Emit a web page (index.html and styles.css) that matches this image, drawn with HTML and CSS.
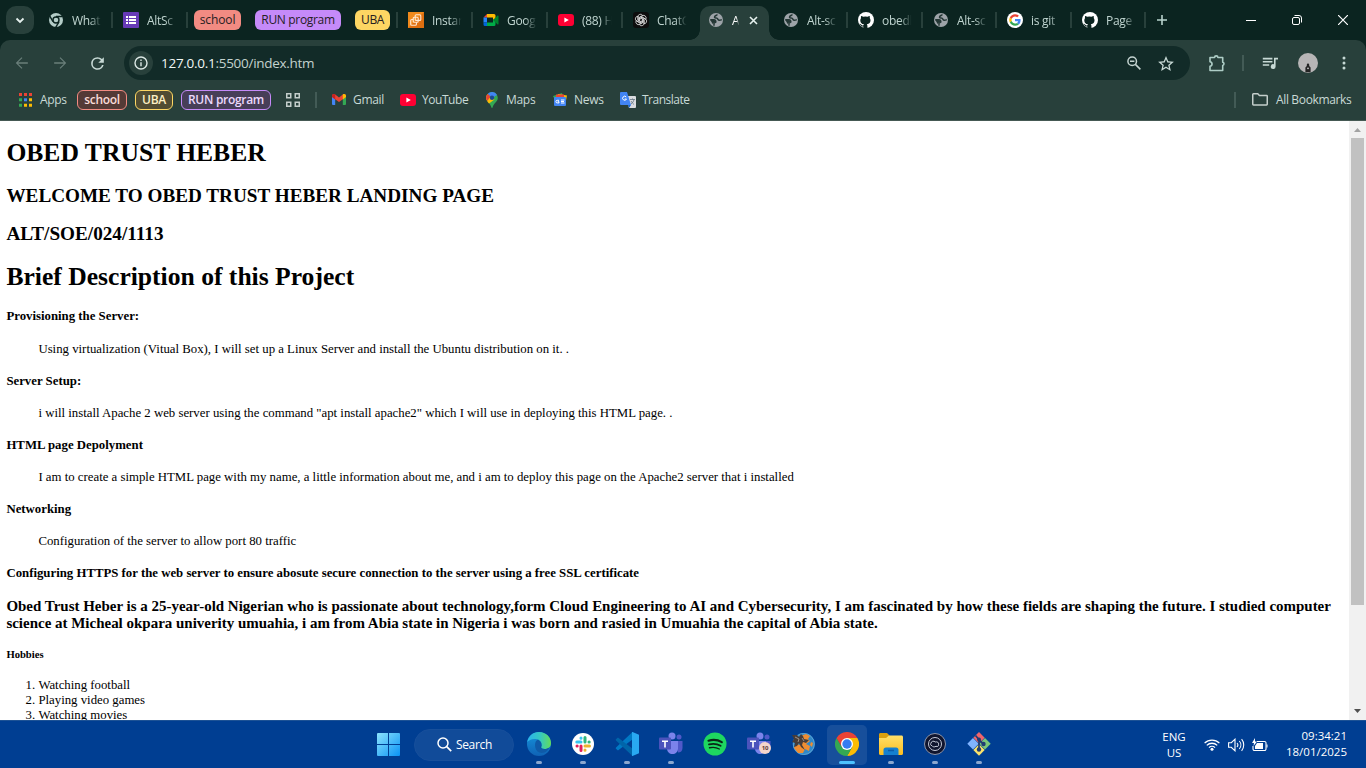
FILE: index.html
```html
<!DOCTYPE html>
<html lang="en">
<head>
<meta charset="utf-8">
<title>Desktop</title>
<link rel="stylesheet" href="styles.css">
</head>
<body>
<svg class="defs" aria-hidden="true">
  <defs>
    <linearGradient id="gWin" x1="0" y1="0" x2="1" y2="1"><stop offset="0" stop-color="#8be3fd"/><stop offset="1" stop-color="#0a93f5"/></linearGradient>
    <linearGradient id="gEdge" x1="0" y1="0" x2="1" y2="0"><stop offset="0" stop-color="#2bb3ee"/><stop offset=".55" stop-color="#35c8c0"/><stop offset="1" stop-color="#63dc5a"/></linearGradient>
    <linearGradient id="gEdge2" x1="0" y1="0" x2="0" y2="1"><stop offset="0" stop-color="#1695dd"/><stop offset="1" stop-color="#0f62b5"/></linearGradient>
    <linearGradient id="gFold" x1="0" y1="0" x2="0" y2="1"><stop offset="0" stop-color="#ffe06a"/><stop offset="1" stop-color="#fcbd1f"/></linearGradient>
    <symbol id="globe" viewBox="0 0 14 14"><circle cx="7" cy="7" r="7" fill="#9da3a8"/><path d="M8.200 1.300C8 2.600 5.500 2.500 5.500 4.200c0 .9 1.500.6 2.300.9 1.200.5.900 1.900 2.200 2.200 1 .2 2-.3 2.800-.7M1.200 6.800h3.600c1.500 0 2.200 1 2 2.300L5 10.200v2.500" fill="none" stroke="#243735" stroke-width="1.500"/><path d="M1.300 7h4l1.300 1.800-1.800 1L3.600 11z" fill="#243735"/></symbol>
    <symbol id="github" viewBox="0 0 16 16"><circle cx="8" cy="8" r="8" fill="#fff"/><path fill="#0b2420" d="M5.300 16c.1-.1.100-1 .1-1.600-2.200.5-2.700-.9-2.700-.9-.4-.9-.9-1.200-.9-1.200-.7-.5.100-.5.100-.5.800.1 1.200.8 1.200.8.700 1.200 1.900.9 2.300.7.100-.5.300-.9.500-1.100-1.800-.2-3.600-.9-3.600-3.900 0-.9.300-1.600.8-2.200-.1-.2-.4-1 .1-2.100 0 0 .7-.2 2.200.8a7.500 7.500 0 0 1 4 0c1.500-1 2.200-.8 2.200-.8.4 1.100.2 1.900.1 2.100.5.600.8 1.300.8 2.200 0 3-1.900 3.700-3.700 3.900.3.300.6.800.6 1.600V16z"/></symbol>
    <symbol id="yt" viewBox="0 0 16 12"><rect width="16" height="12" rx="3" fill="#ff0033"/><path d="M6.400 3.400v5.200L10.800 6z" fill="#fff"/></symbol>
    <symbol id="teams" viewBox="0 0 24 24"><circle cx="13" cy="4" r="3.500" fill="#7b83eb"/><circle cx="20" cy="5" r="2.500" fill="#5059c9"/><path fill="#5059c9" d="M17 9h6.500v7c0 3-2 4.500-4.500 4.500z"/><path fill="#7b83eb" d="M8 9h11v7.500c0 3.500-2.500 5.500-5.500 5.500S8 20 8 16.500z"/><rect x="0" y="5.500" width="12" height="12" rx="1" fill="#4b53bc"/><path fill="#fff" d="M3 8.400h6v1.500H6.800v5.700H5.200V9.900H3z"/></symbol>
  </defs>
</svg>

<div class="desktop">
  <header class="browser">
    <div class="tabstrip">
      <button class="tab-search" aria-label="Search tabs"><svg width="10" height="7" viewBox="0 0 10 7"><path d="M1.500 1.500 5 5l3.500-3.500" fill="none" stroke="#e6f1ee" stroke-width="1.800"/></svg></button>
      <div class="tab tab-first"><svg class="fav" viewBox="0 0 16 16"><circle cx="8" cy="8" r="7" fill="#b4cdc8"/><circle cx="8" cy="8" r="3" fill="#b4cdc8" stroke="#0b2420" stroke-width="1.400"/><path d="M8 4.500h6.500M5 9.700 1.800 4.200M11 9.800l-3.300 5.500" stroke="#0b2420" stroke-width="1.400"/></svg><span class="label">What</span></div>
      <div class="tab"><svg class="fav" viewBox="0 0 16 16"><rect width="16" height="16" rx="1" fill="#673ab7"/><path d="M3 4h2v2H3zm0 3h2v2H3zm0 3h2v2H3zM6 4h7v2H6zm0 3h7v2H6zm0 3h7v2H6z" fill="#fff"/></svg><span class="label">AltSc</span></div>
      <span class="group group-red">school</span>
      <span class="group group-purple">RUN program</span>
      <span class="group group-yellow">UBA</span>
      <div class="tab tab-after"><svg class="fav" viewBox="0 0 16 16"><rect width="16" height="16" fill="#f08a1c"/><path d="M0 16 16 0v16z" fill="#de6f10"/><g fill="none" stroke="#ffe9d2" stroke-width="1.100"><rect x="7.200" y="2.800" width="5.600" height="5.600" rx="1"/><rect x="5.200" y="5.200" width="5" height="5" rx="1"/><path d="M5.200 7.500H3.700a1 1 0 0 0-1 1v3.700a1 1 0 0 0 1 1h3.700a1 1 0 0 0 1-1v-2"/></g></svg><span class="label">Instar</span></div>
      <div class="tab"><svg class="fav" viewBox="0 0 16 16"><path d="M4 2h7a1.500 1.500 0 0 1 1.500 1.500v3L10 8V5.500H4z" fill="#ffba00"/><path d="M4 2v3.500H.500z" fill="#ea4335"/><path d="M.500 5.500H4v5H.500z" fill="#2684fc"/><path d="M.500 10.500H4V14H2a1.500 1.500 0 0 1-1.500-1.500z" fill="#0066da"/><path d="M4 10.500h6V8l2.500-1.500v6A1.500 1.500 0 0 1 11 14H4z" fill="#00ac47"/><path d="m10 8 4.300-4.300c.5-.4 1.200-.2 1.200.4v7.800c0 .6-.7.800-1.200.4z" fill="#00832d"/></svg><span class="label">Goog</span></div>
      <div class="tab"><svg class="fav" viewBox="0 0 16 16"><use href="#yt" y="2" width="16" height="12"/></svg><span class="label">(88) H</span></div>
      <div class="tab tab-plain"><svg class="fav" viewBox="0 0 16 16"><rect width="16" height="16" rx="3" fill="#0d0d0d"/><g fill="none" stroke="#ddd" stroke-width=".8"><path id="petal" d="M8 10.200 4.900 8.400V4.800a2.600 2.600 0 0 1 4.900-1.200L6.700 5.400V8"/><use href="#petal" transform="rotate(60 8 8)"/><use href="#petal" transform="rotate(120 8 8)"/><use href="#petal" transform="rotate(180 8 8)"/><use href="#petal" transform="rotate(240 8 8)"/><use href="#petal" transform="rotate(300 8 8)"/></g></svg><span class="label">ChatG</span></div>
      <div class="tab tab-active"><svg class="fav" viewBox="0 0 16 16"><use href="#globe" x="1" y="1" width="14" height="14"/></svg><span class="label">A</span><svg class="close" viewBox="0 0 9 9"><path d="m1 1 7 7m0-7L1 8" stroke="#e6f1ee" stroke-width="1.600"/></svg></div>
      <div class="tab tab-next"><svg class="fav" viewBox="0 0 16 16"><use href="#globe" x="1" y="1" width="14" height="14"/></svg><span class="label">Alt-sc</span></div>
      <div class="tab"><svg class="fav"><use href="#github"/></svg><span class="label">obedl</span></div>
      <div class="tab tab-narrow"><svg class="fav" viewBox="0 0 16 16"><use href="#globe" x="1" y="1" width="14" height="14"/></svg><span class="label">Alt-sc</span></div>
      <div class="tab"><svg class="fav" viewBox="0 0 16 16"><circle cx="8" cy="8" r="8" fill="#fff"/><g transform="translate(2.200 2.200) scale(.242)"><path fill="#ea4335" d="M24 9.500c3.540 0 6.710 1.220 9.210 3.600l6.850-6.850C35.900 2.380 30.470 0 24 0 14.620 0 6.510 5.380 2.560 13.220l7.980 6.190C12.430 13.720 17.740 9.500 24 9.500z"/><path fill="#4285f4" d="M46.980 24.550c0-1.570-.15-3.090-.38-4.550H24v9.020h12.940c-.58 2.960-2.260 5.480-4.780 7.180l7.730 6c4.510-4.180 7.090-10.360 7.090-17.650z"/><path fill="#fbbc05" d="M10.530 28.590c-.48-1.450-.76-2.990-.76-4.590s.27-3.140.76-4.590l-7.980-6.190C.92 16.460 0 20.120 0 24c0 3.880.92 7.540 2.560 10.780z"/><path fill="#34a853" d="M24 48c6.480 0 11.930-2.130 15.890-5.810l-7.730-6c-2.150 1.450-4.920 2.300-8.160 2.300-6.260 0-11.570-4.220-13.470-9.910l-7.980 6.190C6.510 42.620 14.620 48 24 48z"/></g></svg><span class="label">is git</span></div>
      <div class="tab tab-narrow"><svg class="fav"><use href="#github"/></svg><span class="label">Page</span></div>
      <svg class="new-tab" width="10" height="10" viewBox="0 0 10 10"><path d="M5 0v10M0 5h10" stroke="#b8d3cd" stroke-width="1.600"/></svg>
      <div class="window-controls">
        <svg width="10" height="10" viewBox="0 0 10 10"><path d="M0 5.500h10" stroke="#fff"/></svg>
        <svg width="10" height="10" viewBox="0 0 10 10"><rect x=".5" y="2.500" width="7" height="7" rx="1.500" fill="none" stroke="#fff"/><path d="M2.500.5H7A2.500 2.500 0 0 1 9.500 3v4.500" fill="none" stroke="#fff"/></svg>
        <svg width="10" height="10" viewBox="0 0 10 10"><path d="m0 0 10 10M10 0 0 10" stroke="#fff" stroke-width="1.200"/></svg>
      </div>
    </div>

    <div class="toolbar">
      <svg class="nav dim" viewBox="0 0 24 24"><path d="M19 11.200H7.300l5.200-5.200L11.500 5l-7 7 7 7 1-1-5.200-5.200H19z"/></svg>
      <svg class="nav dim flip" viewBox="0 0 24 24"><path d="M19 11.200H7.300l5.200-5.200L11.500 5l-7 7 7 7 1-1-5.200-5.200H19z"/></svg>
      <svg class="nav" viewBox="0 0 24 24"><path d="M17.650 6.350A7.960 7.960 0 0 0 12 4c-4.420 0-8 3.580-8 8s3.580 8 8 8c3.730 0 6.840-2.550 7.730-6h-2.080A6 6 0 1 1 12 6c1.660 0 3.140.69 4.220 1.780L13 11h7V4z"/></svg>
      <div class="omnibox">
        <span class="site-info"><svg width="14" height="14" viewBox="0 0 14 14"><circle cx="7" cy="7" r="6" fill="none" stroke="#dbe7e4" stroke-width="1.400"/><path d="M7 6.200v4M7 3.600V5" stroke="#dbe7e4" stroke-width="1.400"/></svg></span>
        <span class="url">127.0.0.1<span class="path">:5500/index.htm</span></span>
        <svg class="zoom-out" width="14" height="14" viewBox="0 0 14 14"><g fill="none" stroke="#c4d3d0" stroke-width="1.500"><circle cx="5.200" cy="5.200" r="4.300"/><path d="m8.400 8.400 5 5M3 5.200h4.400"/></g></svg>
        <svg class="star" viewBox="2 2 20 19"><path d="m22 9.240-7.190-.62L12 2 9.190 8.630 2 9.240l5.460 4.730L5.820 21 12 17.270 18.180 21l-1.630-7.030zM12 15.400l-3.760 2.270 1-4.280-3.320-2.880 4.380-.38L12 6.100l1.710 4.040 4.380.38-3.320 2.880 1 4.280z"/></svg>
      </div>
      <svg class="extensions" width="18" height="18" viewBox="0 0 18 18"><path d="M2 3.500h4.600a1.500 1.500 0 0 1 3.300 0h4.800v4.700a1.700 1.700 0 0 1 0 3.300v5H2v-4.300c2.700-.4 2.700-4 0-4.400z" fill="none" stroke="#aecdc6" stroke-width="1.600" stroke-linejoin="round"/></svg>
      <span class="vsep"></span>
      <svg class="media" viewBox="2 5 20 15"><path d="M15 6H3v2h12zm0 4H3v2h12zM3 16h8v-2H3zM17 6v8.180A3 3 0 1 0 19 17V8h3V6z"/></svg>
      <svg class="avatar" width="20" height="20" viewBox="0 0 20 20"><circle cx="10" cy="10" r="10" fill="#b7b5b6"/><path d="M7.400 19v-4.500L8.800 13v-1.300a1.200 1.200 0 0 1 2.400 0V13l1.400 1.500V19a10 10 0 0 1-5.200 0z" fill="#242424"/><circle cx="10" cy="15.300" r=".9" fill="#ccc"/></svg>
      <svg class="menu" width="4" height="14" viewBox="0 0 4 14"><circle cx="2" cy="2" r="1.500"/><circle cx="2" cy="7" r="1.500"/><circle cx="2" cy="12" r="1.500"/></svg>
    </div>

    <div class="bookmarks">
      <svg class="apps" width="13" height="14" viewBox="0 0 13 14"><path fill="#ea4335" d="M0 0h3v3H0zm5 0h3v3H5zm5 0h3v3h-3z"/><path fill="#34a853" d="M0 5.300h3v3H0zm0 5.400h3v3H0z"/><path fill="#4285f4" d="M5 5.300h3v3H5z"/><path fill="#fbbc04" d="M10 5.300h3v3h-3zm0 5.400h3v3h-3zm-5 0h3v3H5z"/></svg>
      <span class="bm apps-label">Apps</span>
      <span class="chip chip-red">school</span>
      <span class="chip chip-yellow">UBA</span>
      <span class="chip chip-purple">RUN program</span>
      <svg class="grid4" width="14" height="14" viewBox="0 0 14 14"><g fill="none" stroke="#c4cecb" stroke-width="1.500"><rect x=".75" y=".75" width="4" height="4"/><rect x="9.250" y=".75" width="4" height="4"/><rect x=".75" y="9.250" width="4" height="4"/><rect x="9.250" y="9.250" width="4" height="4"/></g></svg>
      <span class="vsep bm-sep"></span>
      <svg class="gmail" width="14" height="11" viewBox="0 0 14 11"><path fill="#4285f4" d="M0 2h3.200v9H1a1 1 0 0 1-1-1z"/><path fill="#34a853" d="M10.800 2H14v8a1 1 0 0 1-1 1h-2.200z"/><path fill="#ea4335" d="M0 2c0-2 2-2.500 3.200-1.500L7 3.500l3.800-3C12 -.5 14 0 14 2v1L7 8 0 3z"/><path fill="#c5221f" d="M0 2c0-1.800 2-2.500 3.200-1.500v4.900L0 3z"/><path fill="#fbbc04" d="M14 2c0-1.800-2-2.500-3.200-1.500v4.900L14 3z"/></svg>
      <span class="bm w-gmail">Gmail</span>
      <svg class="bmyt"><use href="#yt"/></svg>
      <span class="bm w-youtube">YouTube</span>
      <svg class="maps" width="12" height="16" viewBox="0 0 12 16"><path d="M6 0a5.800 5.800 0 0 1 5.800 5.800C11.800 10 7.500 11 6.600 15.500c-.1.500-1.100.5-1.200 0C4.500 11 .2 10 .2 5.800A5.800 5.800 0 0 1 6 0z" fill="#34a853"/><path d="M1.600 2.100 8.500 7.500 3 11.500C1.500 9.800.2 8.200.2 5.800c0-1.500.5-2.700 1.400-3.700z" fill="#fbbc04"/><path d="M1.600 2.100 6 6l5-3.100A5.800 5.800 0 0 0 1.600 2.100z" fill="#4285f4"/><path d="m1.600 2.100 3 2.500L1.300 9A5.700 5.700 0 0 1 1.600 2.100z" fill="#ea4335"/><circle cx="6" cy="5.800" r="2.200" fill="#1b4a91"/></svg>
      <span class="bm w-maps">Maps</span>
      <svg class="news" width="14" height="13" viewBox="0 0 14 13"><path fill="#34a853" d="m0 3 9-3 2 6-8 3z"/><path fill="#fbbc04" d="m5 1 9 1.500-1 5-9-1z"/><path fill="#ea4335" d="M3 1.500h8V6H3z"/><rect x="1" y="4" width="12" height="9" rx="1" fill="#4285f4"/><path d="M6 7.300H4.200a1.300 1.300 0 1 0 0 2.600H6V8.700H4.700M8 7h3.500M8 8.500h3M8 10h3.500" stroke="#fff" fill="none"/></svg>
      <span class="bm w-news">News</span>
      <svg class="translate" width="16" height="16" viewBox="0 0 16 16"><path fill="#dadce0" d="M6 4h9a1 1 0 0 1 1 1v10a1 1 0 0 1-1 1H9z"/><path fill="#4285f4" d="M1 0h6l4 13H1a1 1 0 0 1-1-1V1a1 1 0 0 1 1-1z"/><path fill="#1967d2" d="m8 13 3 0-2 3z"/><path d="M6.200 5a2 2 0 1 0 .3 2H4.700" stroke="#fff" fill="none"/><path d="M10 7.500h5M12.500 6.500v1M14 7.500c-.5 2-1.500 3.500-3 4.500M11 9c.7 1.500 2 2.500 3 3.500" stroke="#637381" stroke-width=".8" fill="none"/></svg>
      <span class="bm">Translate</span>
      <div class="bm-right">
        <span class="vsep"></span>
        <svg class="folder" width="16" height="13" viewBox="0 0 16 13"><path d="M.75 1.500c0-.4.3-.75.7-.75h4.300l1.700 1.700h7.100c.4 0 .7.300.7.700v8.100c0 .4-.3.700-.7.700H1.450a.7.700 0 0 1-.7-.7z" fill="none" stroke="#c4cecb" stroke-width="1.500"/></svg>
        <span class="bm all-bm">All Bookmarks</span>
      </div>
    </div>
  </header>

  <div class="viewport">
    <main class="page">
      <h1>OBED TRUST HEBER</h1>
      <h2>WELCOME TO OBED TRUST HEBER LANDING PAGE</h2>
      <h2>ALT/SOE/024/1113</h2>
      <h1>Brief Description of this Project</h1>
      <h4 class="first">Provisioning the Server:</h4>
      <p class="indent">Using virtualization (Vitual Box), I will set up a Linux Server and install the Ubuntu distribution on it. .</p>
      <h4>Server Setup:</h4>
      <p class="indent">i will install Apache 2 web server using the command "apt install apache2" which I will use in deploying this HTML page. .</p>
      <h4>HTML page Depolyment</h4>
      <p class="indent">I am to create a simple HTML page with my name, a little information about me, and i am to deploy this page on the Apache2 server that i installed</p>
      <h4>Networking</h4>
      <p class="indent">Configuration of the server to allow port 80 traffic</p>
      <h4>Configuring HTTPS for the web server to ensure abosute secure connection to the server using a free SSL certificate</h4>
      <h3>Obed Trust Heber is a 25-year-old Nigerian who is passionate about technology,form Cloud Engineering to AI and Cybersecurity, I am fascinated by how these fields are shaping the future. I studied computer science at Micheal okpara univerity umuahia, i am from Abia state in Nigeria i was born and rasied in Umuahia the capital of Abia state.</h3>
      <h5>Hobbies</h5>
      <ol><li>Watching football</li><li>Playing video games</li><li>Watching movies</li></ol>
    </main>
    <div class="scrollbar">
      <svg width="7" height="4" viewBox="0 0 7 4"><path d="M0 4 3.500 0 7 4z" fill="#a3a3a3"/></svg>
      <span class="thumb"></span>
      <svg width="7" height="4" viewBox="0 0 7 4"><path d="m0 0 3.500 4L7 0z" fill="#505050"/></svg>
    </div>
  </div>

  <footer class="taskbar">
    <div class="dock">
      <svg class="start" width="23" height="23" viewBox="0 0 23 23"><path fill="url(#gWin)" d="M1 0h10v11H0V1a1 1 0 0 1 1-1zm11 0h10a1 1 0 0 1 1 1v10H12zM0 12h11v11H1a1 1 0 0 1-1-1zm12 0h11v10a1 1 0 0 1-1 1H12z"/></svg>
      <div class="search"><svg width="15" height="15" viewBox="0 0 15 15"><circle cx="6" cy="6" r="5" fill="none" stroke="#fff" stroke-width="1.500"/><path d="m9.700 9.700 4.500 4.500" stroke="#fff" stroke-width="1.700"/></svg><span>Search</span></div>
      <div class="app run"><svg viewBox="0 0 24 24"><circle cx="12" cy="12" r="12" fill="url(#gEdge2)"/><path fill="url(#gEdge)" d="M.2 10C1.300 4 6 0 12 0c7 0 12 5 12 11 0 4-3 6-6.500 6-2.500 0-4-1-3.600-2 .6-1 .8-2 .6-3C14 9 11 7 7.500 7 4 7 1.500 8.500.2 10z"/><path fill="#0f5aa8" d="M8 13c0-3 1.500-5 3-5.500 2 1 3.500 3 3.500 4.500 0 2-2 3-.5 4.200 2.500 1.800 6 1 8.500-.7C20 21 15 21.500 12.500 20.500 9.500 19.500 8 16.500 8 13z"/><path fill="#003e92" d="M14.500 12c0 2-2 3-.5 4.200 3 1.800 7 1 10 -1.200-1.500 1.500-4 2.300-6.500 2-3-.3-4-1.300-3-3z"/></svg></div>
      <div class="app run"><svg viewBox="0 0 24 24"><circle cx="12" cy="12" r="11" fill="#fff"/><g stroke-width="3" stroke-linecap="round"><path d="M10 6v.2M5.800 10H10" stroke="#36c5f0"/><path d="M14 5.500V10M18 10h.2" stroke="#2eb67d"/><path d="M14 14h4.500M14 18v.2" stroke="#ecb22e"/><path d="M10 14v4.500M6 14h.2" stroke="#e01e5a"/></g></svg></div>
      <div class="app run"><svg viewBox="0 0 24 24"><path fill="#0079c5" d="M17.500 0 1 15.500c-.4.400-.4 1 0 1.300l1.300 1.300c.4.300.9.300 1.300 0L18 7V1z"/><path fill="#0065a9" d="M17.500 24 1 8.500c-.4-.4-.4-1 0-1.300l1.300-1.300c.4-.3.900-.3 1.300 0L18 17v6z"/><path fill="#29a9f2" d="M17.500 0 24 2.800v18.400L17.500 24c-.5 0-.7-.5-.5-1V1c-.2-.5 0-1 .5-1z"/></svg></div>
      <div class="app run"><svg><use href="#teams"/></svg></div>
      <div class="app"><svg viewBox="0 0 24 24"><circle cx="12" cy="12" r="11.500" fill="#1ed760"/><g fill="none" stroke="#0b2616" stroke-linecap="round"><path d="M5.500 8.700c4.500-1.300 9.500-.8 13.300 1.400" stroke-width="2.200"/><path d="M6 12.400c4-1.100 8.200-.6 11.600 1.300" stroke-width="1.800"/><path d="M6.500 15.800c3.500-.9 6.800-.5 9.800 1.200" stroke-width="1.400"/></g></svg></div>
      <div class="app"><svg viewBox="0 0 24 24"><use href="#teams"/><circle cx="18" cy="16" r="6" fill="#f4d5cb"/><text class="badge" x="14.700" y="18.300">10</text></svg></div>
      <div class="app"><svg viewBox="0 0 24 24"><circle cx="12.800" cy="12" r="11" fill="#2f88c9"/><circle cx="12.800" cy="12" r="10.500" fill="none" stroke="#5ba3d4"/><path fill="#ef8d32" d="m9 4 6-2 4 2-2 3 2 2-4 3 4 2-1 5-4-2-2 4-5 0-4-5 2-4 4 1z"/><path fill="#ef8d32" d="m20 10 2 1-1 4-2-2z"/><path fill="#473c38" d="m1 3 5 0 2 2 2-3 2 2 1 3 5 1-3 3-3-1-1 3 3 5-4-3-2-4-2 3-3 1 1-4-3-1 2-3z"/><path d="m4 5 4 2-1 3M11 6l2 3" stroke="#9b9087" fill="none"/></svg></div>
      <div class="app current"><svg viewBox="0 0 24 24"><path fill="#ea4335" d="M1.600 6A12 12 0 0 1 22.400 6H12v6z"/><path fill="#fbbc04" d="M22.400 6A12 12 0 0 1 12 24l5.200-9L12 6z"/><path fill="#34a853" d="M12 24A12 12 0 0 1 1.600 6l5.200 9 5.200 3 3.200.7z"/><path fill="#34a853" d="m6.800 15 5.200 3 5.200-3L12 24z"/><path fill="#ea4335" d="M1.600 6 6.800 15 8 8l4-2z"/><circle cx="12" cy="12" r="6" fill="#fff"/><circle cx="12" cy="12" r="4.700" fill="#367cf0"/></svg></div>
      <div class="app run"><svg viewBox="0 0 24 24"><path fill="#dba00d" d="M0 2.500C0 1.600.6 1 1.500 1H8l2.500 2.500L8 7H0z"/><path fill="url(#gFold)" d="M0 6h7l3-2.500h12.500c.9 0 1.500.6 1.500 1.500v16.500c0 .9-.6 1.500-1.500 1.500h-21C.6 23 0 22.400 0 21.500z"/><path fill="#1480d1" d="M4.500 23v-5c0-1.500.8-2.500 2.500-2.500h10c1.700 0 2.500 1 2.500 2.500v5z"/><path stroke="#0b5ba9" stroke-width="1.500" d="M9 18.500h6"/></svg></div>
      <div class="app run"><svg viewBox="0 0 24 24"><circle cx="12" cy="12" r="10.500" fill="#10152e" stroke="#8d94a8"/><g fill="none" stroke="#c5cad8" stroke-width="1"><circle cx="12" cy="12" r="6.500"/><path d="M8 11.200c0-2 3-2.700 4.200-1.200 2-.7 4 .7 3.300 2.200.8 1.600-.9 2.900-2.500 2.100-1.300 1-3.500.7-4-.6-1.600-.2-1.800-1.700-1-2.500z"/></g></svg></div>
      <div class="app run"><svg viewBox="0 0 24 24"><path fill="#ef646b" d="m12 0 5.700 5.700L12 11.400 6.300 5.700z"/><path fill="#80b3ff" d="m6 6 5.700 5.700L6 17.400.3 11.700z"/><path fill="#7bc67a" d="m18 6 5.700 5.700L18 17.400l-5.700-5.700z"/><path fill="#fae26b" d="m12 12.300 5.700 5.700L12 23.700 6.300 18z"/><path d="m8.500 3.500 3.500 4V18M12 8l4.500 4" stroke="#203c73" stroke-width="1.700" fill="none"/><g fill="#203c73"><circle cx="12" cy="7.500" r="2"/><circle cx="12" cy="17.500" r="2.200"/><circle cx="16.500" cy="12" r="2.200"/></g></svg></div>
    </div>
    <div class="tray">
      <div class="lang">ENG<br>US</div>
      <svg class="wifi" width="16" height="13" viewBox="0 0 16 13"><g fill="none" stroke="#fff" stroke-width="1.300"><path d="M.6 5.100a10.500 10.500 0 0 1 14.800 0M2.800 7.400a7.400 7.400 0 0 1 10.400 0M5 9.600a4.300 4.300 0 0 1 6 0"/></g><circle cx="8" cy="11.300" r="1.500" fill="#fff"/></svg>
      <svg class="sound" width="17" height="14" viewBox="0 0 17 14"><g fill="none" stroke="#fff" stroke-width="1.100"><path d="M.6 4.700h2.700L7 1.200v11.600L3.300 9.300H.6zM9 5a3 3 0 0 1 0 4M11.300 3a6 6 0 0 1 0 8M13.600 1.200a9 9 0 0 1 0 11.600"/></g></svg>
      <svg class="battery" width="16" height="14" viewBox="0 0 16 14"><path d="M5 3.500h7.500a1.500 1.500 0 0 1 1.500 1.500v6a1.500 1.500 0 0 1-1.500 1.500h-10A1.500 1.500 0 0 1 1 11V8" fill="none" stroke="#fff" stroke-width="1.100"/><path fill="#fff" d="M5 5h6v6H3V8zM14.500 6.500h1v3h-1zM3 0 0 5h2L1.500 8 5 3.500H3z"/></svg>
      <div class="clock">09:34:21<br>18/01/2025</div>
    </div>
  </footer>
</div>
</body>
</html>
```
FILE: styles.css
```css
* { box-sizing: border-box; }
body { margin: 0; overflow: hidden; font-family: "Open Sans", "Noto Sans", sans-serif; }
svg { display: block; flex: none; }
.defs { position: absolute; width: 0; height: 0; }
.desktop { width: 1366px; height: 768px; display: flex; flex-direction: column; overflow: hidden; background: #fff; }

.browser { height: 121px; flex: none; background: #0b2420; }
.tabstrip { height: 40px; display: flex; align-items: center; padding-left: 6px; }
.tab-search { width: 28px; height: 28px; flex: none; border: 0; border-radius: 10px; background: #28403b; display: flex; align-items: center; justify-content: center; padding: 0; }
.tab { position: relative; flex: none; width: 75px; height: 40px; padding: 0 0 0 10px; display: flex; align-items: center; }
.tab::after { content: ""; position: absolute; right: 0; top: 12px; width: 2px; height: 16px; background: #28403b; }
.tab-first { margin-left: 4px; }
.tab-narrow { width: 74px; }
.tab-plain::after, .tab-active::after { display: none; }
.tab-after { margin-left: 8px; }
.tab-after::before { content: ""; position: absolute; left: -2px; top: 12px; width: 2px; height: 16px; background: #28403b; }
.fav { width: 16px; height: 16px; }
.label { margin-left: 8px; width: 33px; padding-top: 1px; white-space: nowrap; font-size: 12px; line-height: 18px; letter-spacing: -.3px; color: #c0d5d0; -webkit-mask-image: linear-gradient(90deg, #000 55%, transparent 90%); mask-image: linear-gradient(90deg, #000 55%, transparent 90%); }
.tab-active { width: 69px; height: 34px; margin: 6px 4px 0 2px; padding: 0 0 6px 8px; background: #28403b; border-radius: 10px 10px 0 0; }
.tab-active::before { content: ""; position: absolute; left: -10px; right: -10px; bottom: 0; height: 10px; background: radial-gradient(circle at 0 0, transparent 9.500px, #28403b 10px) left / 10px 10px no-repeat, radial-gradient(circle at 100% 0, transparent 9.500px, #28403b 10px) right / 10px 10px no-repeat; }
.tab-active .label { width: 8px; color: #fff; }
.close { width: 9px; height: 9px; margin-left: 9px; }
.group { height: 20px; flex: none; border-radius: 6px; font-size: 12px; line-height: 19px; text-align: center; white-space: nowrap; color: #26201f; letter-spacing: -.1px; }
.group-red { width: 47px; margin-left: 6px; background: #f28b82; }
.group-purple { width: 86px; margin-left: 14px; background: #c58af9; letter-spacing: -.33px; }
.group-yellow { width: 35px; margin-left: 14px; background: #fdd663; letter-spacing: -.4px; }
.new-tab { margin-left: 11px; }
.window-controls { margin-left: auto; padding-right: 18px; display: flex; gap: 36px; }

.toolbar { height: 40px; display: flex; align-items: center; padding: 6px 20px 0 12px; background: #28403b; border-radius: 10px 10px 0 0; }
.toolbar svg { fill: #c7d9d5; }
.nav { width: 20px; height: 20px; margin-right: 18px; }
.toolbar .dim { fill: #6a7f7a; }
.flip { transform: scaleX(-1); }
.nav:nth-child(3) { width: 19px; height: 19px; margin-right: 17px; }
.omnibox { width: 1066px; height: 34px; flex: none; display: flex; align-items: center; padding: 0 16px 0 5px; border-radius: 17px; background: #122b28; }
.site-info { width: 24px; height: 24px; display: flex; align-items: center; justify-content: center; border-radius: 50%; background: #28403b; }
.url { margin-left: 8px; flex: 1; font-size: 13.500px; color: #f1f8f6; letter-spacing: -.28px; }
.path { color: #c3d2ce; }
.star { width: 16px; height: 15px; margin-left: 17px; }
.omnibox .zoom-out, .toolbar .extensions { fill: none; }
.extensions { margin-left: 18px; }
.vsep { width: 2px; height: 16px; flex: none; background: #435b56; }
.toolbar .vsep { margin-left: 16px; }
.media { width: 16px; height: 12px; margin-left: 18px; }
.avatar { margin-left: 20px; }
.menu { margin-left: 24px; }

.bookmarks { height: 41px; display: flex; align-items: center; padding: 0 14px 1px 19px; background: #28403b; border-bottom: 1px solid #455953; }
.bm { font-size: 12px; line-height: 18px; padding-top: 1px; color: #c9dad6; white-space: nowrap; letter-spacing: -.45px; }
.apps-label { width: 30px; margin-left: 8px; letter-spacing: -.3px; }
.chip { height: 20px; flex: none; border: 1px solid; border-radius: 6px; font-size: 12px; line-height: 18px; font-weight: 600; text-align: center; letter-spacing: -.3px; white-space: nowrap; }
.chip-red { width: 50px; margin-left: 7px; border-color: #f28b82; background: #543a36; color: #fbdcd8; }
.chip-yellow { width: 38px; margin-left: 8px; border-color: #fdd663; background: #514c32; color: #fdf0c4; }
.chip-purple { width: 90px; margin-left: 8px; border-color: #c58af9; background: #473e58; color: #ecd9fd; }
.grid4 { margin-left: 15px; }
.bm-sep { margin: 0 15px 0 15px; }
.w-gmail { width: 31px; margin: 0 16px 0 7px; letter-spacing: -.3px; }
.bmyt { width: 16px; height: 12px; }
.w-youtube { width: 46px; margin-left: 6px; margin-right: 18px; }
.w-maps { width: 29px; margin: 0 18px 0 8px; letter-spacing: -.3px; }
.w-news { width: 29px; margin: 0 17px 0 7px; letter-spacing: -.3px; }
.translate + .bm { margin-left: 6px; letter-spacing: -.5px; }
.bm-right { margin-left: auto; display: flex; align-items: center; }
.folder { margin: 0 8px 0 16px; }
.all-bm { width: 76px; letter-spacing: -.35px; }

.viewport { height: 599px; flex: none; display: flex; overflow: hidden; }
.page { width: 1349px; height: 599px; overflow: hidden; padding: 0 6.400px; font-family: "Liberation Serif", "Times New Roman", serif; font-size: 12.800px; line-height: 15px; color: #000; }
.page h1 { font-size: 25.600px; line-height: 30px; margin: 17px 0; }
.page h2 { font-size: 19.200px; line-height: 22px; margin: 16px 0; }
.page h3 { font-size: 14.976px; line-height: 17px; margin: 15px 0; }
.page h4 { font-size: 12.800px; line-height: 15px; margin: 17px 0; }
.page .first { margin: 17px 0 18px; }
.page h5 { font-size: 10.624px; line-height: 12px; margin: 17px 0; }
.page .indent { margin: 0 0 0 32px; }
.page ol { margin: 0; padding-left: 32px; }
.scrollbar { width: 17px; height: 599px; display: flex; flex-direction: column; align-items: center; padding: 7px 0 7px; background: #f1f1f1; }
.thumb { width: 13px; height: 467px; margin: 6px 0 auto; background: #c1c1c1; }

.taskbar { height: 48px; flex: none; display: flex; align-items: center; border-top: 1px solid #1d5295; background: #003e92; color: #fff; padding: 0 19px 0 377px; }
.dock { display: flex; align-items: center; height: 47px; }
.search { width: 100px; height: 32px; margin: 0 3px 0 14px; display: flex; align-items: center; padding-left: 22px; gap: 4px; border-radius: 16px; background: #114b99; border: 1px solid #174f9b; font-size: 12px; letter-spacing: -.35px; }
.app { position: relative; width: 40px; height: 40px; margin: 0 2px; display: flex; align-items: center; justify-content: center; border-radius: 5px; }
.dock > svg, .app svg { margin-bottom: 1px; }
.app svg { width: 24px; height: 24px; }
.app.run::after, .app.current::after { content: ""; position: absolute; bottom: 1px; left: 17px; width: 6px; height: 3px; border-radius: 2px; background: #8ba7cf; }
.app.current { background: #174f9b; }
.app.current::after { left: 12px; width: 16px; background: #4cc2ff; }
.badge { font: bold 6px "Open Sans", sans-serif; fill: #5b3935; }
.tray { margin-left: auto; display: flex; align-items: center; font-size: 11.500px; line-height: 16px; }
.lang { text-align: center; width: 26px; }
.wifi { margin-left: 17px; }
.sound { margin-left: 8px; }
.battery { margin-left: 7px; }
.clock { text-align: right; width: 72px; margin: -1px 0 0 7px; line-height: 16px; }
```
